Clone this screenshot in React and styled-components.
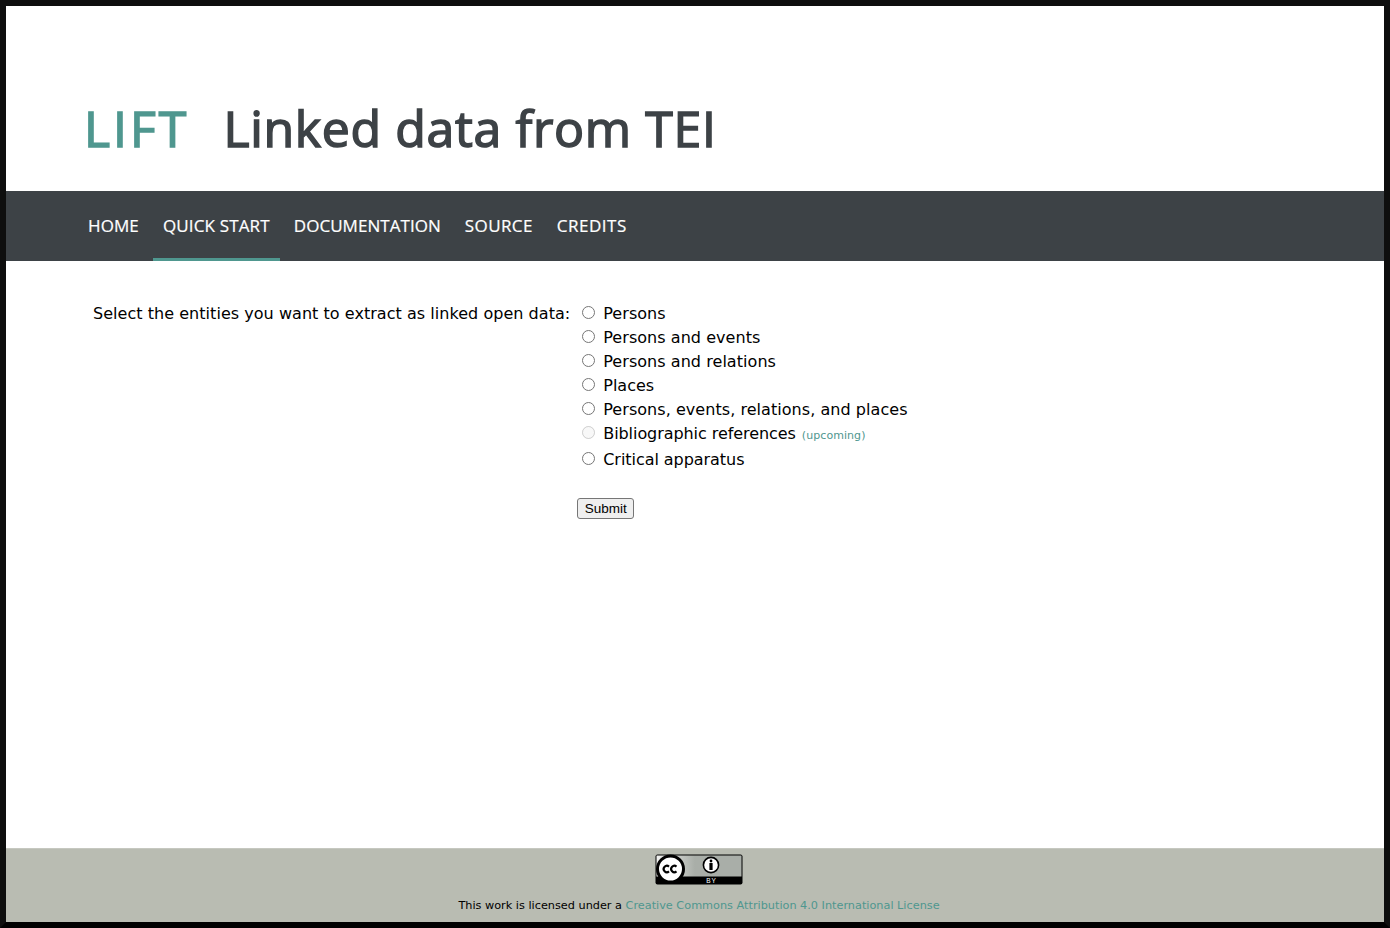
import React from 'react'
import styled, { createGlobalStyle } from 'styled-components'

const teal = '#4f978f'
const dark = '#3d4246'

const GlobalStyle = createGlobalStyle`
  html, body {
    margin: 0;
    padding: 0;
    background: #000;
  }
`

const Frame = styled.div`
  box-sizing: border-box;
  display: flex;
  flex-direction: column;
  height: 928px;
  border: 6px solid #0e0e0e;
  border-bottom-color: #000;
  background: #fff;
`

const Header = styled.header`
  display: flex;
  align-items: center;
  gap: 34px;
  height: 185px;
  box-sizing: border-box;
  padding: 58px 0 0 78px;
  font-family: "Open Sans", sans-serif;
  font-size: 50px;
  -webkit-text-stroke: 1.5px currentColor;
`

const Brand = styled.span`
  color: ${teal};
  letter-spacing: 3px;
`

const Title = styled.span`
  color: ${dark};
  letter-spacing: 0.65px;
`

const Nav = styled.nav`
  display: flex;
  height: 70px;
  padding-left: 72px;
  background: ${dark};
`

const NavItem = styled.a`
  display: flex;
  align-items: center;
  box-sizing: border-box;
  height: 70px;
  padding: 1px 10px 0;
  margin-right: 4px;
  color: #fff;
  font-family: "Open Sans", sans-serif;
  font-size: 17px;
  letter-spacing: ${p => p.$spacing}px;
  -webkit-text-stroke: 0.2px currentColor;
  border-bottom: 3px solid ${p => (p.$active ? teal : 'transparent')};
`

const Main = styled.main`
  flex: 1;
  display: flex;
  align-items: flex-start;
  padding: 40px 0 0 87px;
  font-family: "DejaVu Sans", Verdana, sans-serif;
  font-size: 16px;
  color: #000;
`

const Prompt = styled.div`
  line-height: 24px;
  margin: 1px 7px 0 0;
  letter-spacing: 0.04px;
`

const Form = styled.form`
  display: flex;
  flex-direction: column;
`

const Options = styled.div`
  display: flex;
  flex-direction: column;
`

const Option = styled.label`
  display: flex;
  align-items: center;
  height: 24px;
  padding-left: 5px;
  letter-spacing: ${p => p.$spacing ?? 0.05}px;
  margin-bottom: ${p => (p.$tall ? 2 : 0)}px;
`

const Radio = styled.input`
  width: 13px;
  height: 13px;
  margin: 0 8px 2px 0;
`

const Upcoming = styled.small`
  margin: 5px 0 0 6px;
  color: ${teal};
  font-size: 11px;
  letter-spacing: 0.06px;
`

const Submit = styled.button`
  align-self: flex-start;
  box-sizing: border-box;
  height: 21px;
  width: 57px;
  margin-top: 27px;
  padding: 0;
  font-family: "Liberation Sans", Arial, sans-serif;
  font-size: 13.5px;
  color: #000;
  background: #efefef;
  border: 1px solid #767676;
  border-radius: 3px;
`

const Footer = styled.footer`
  box-sizing: border-box;
  height: 74px;
  padding: 5px 0 0 8px;
  display: flex;
  flex-direction: column;
  align-items: center;
  background: #b9bcb2;
  border-top: 1px solid #c6c8c0;
  font-family: "DejaVu Sans", Verdana, sans-serif;
  font-size: 11.28px;
  color: #000;
`

const Licence = styled.p`
  margin: 14px 0 0;
  line-height: 14px;
`

const LicenceLink = styled.a`
  color: ${teal};
`

const CcBadge = () => (
  <svg width="88" height="31" viewBox="0 0 88 31" role="img" aria-label="CC BY">
    <defs>
      <linearGradient id="badgeFade" x1="0" x2="1" y1="0" y2="0">
        <stop offset="0" stopColor="#f2f2f0" />
        <stop offset="0.45" stopColor="#a9aea8" />
        <stop offset="1" stopColor="#a9aea8" />
      </linearGradient>
    </defs>
    <rect x="0.5" y="0.5" width="87" height="30" rx="2" fill="#000" />
    <rect x="1.5" y="1.5" width="85" height="21" fill="url(#badgeFade)" />
    <circle cx="15.5" cy="15" r="13" fill="#fff" stroke="#000" strokeWidth="3" />
    <path d="M14 12.6a3.2 3.2 0 1 0 0 4.8M21.5 12.6a3.2 3.2 0 1 0 0 4.8" fill="none" stroke="#000" strokeWidth="2.1" />
    <circle cx="56" cy="11" r="7.6" fill="#fff" stroke="#000" strokeWidth="1.6" />
    <circle cx="56" cy="7" r="1.4" fill="#000" />
    <rect x="54.4" y="9" width="3.2" height="7" fill="#000" />
    <text x="56.5" y="29.3" textAnchor="middle" fill="#fff" fontFamily="Liberation Sans, sans-serif" fontSize="6.5" letterSpacing="1">BY</text>
  </svg>
)

const options = [
  { label: 'Persons' },
  { label: 'Persons and events' },
  { label: 'Persons and relations' },
  { label: 'Places', spacing: 0 },
  { label: 'Persons, events, relations, and places' },
]

const navItems = [
  { label: 'HOME', spacing: 0.1 },
  { label: 'QUICK START', spacing: 0.15 },
  { label: 'DOCUMENTATION', spacing: 0.05 },
  { label: 'SOURCE', spacing: 0.4 },
  { label: 'CREDITS', spacing: 0.5 },
]

export default function App() {
  return (
    <Frame>
      <GlobalStyle />
      <Header>
        <Brand>LIFT</Brand>
        <Title>Linked data from TEI</Title>
      </Header>
      <Nav>
        {navItems.map(({ label, spacing }) => (
          <NavItem key={label} $spacing={spacing} $active={label === 'QUICK START'}>{label}</NavItem>
        ))}
      </Nav>
      <Main>
        <Prompt>Select the entities you want to extract as linked open data:</Prompt>
        <Form onSubmit={e => e.preventDefault()}>
          <Options>
            {options.map(({ label, spacing }) => (
              <Option key={label} $spacing={spacing}>
                <Radio type="radio" name="entity" />
                {label}
              </Option>
            ))}
            <Option $tall $spacing={-0.065}>
              <Radio type="radio" name="entity" disabled />
              Bibliographic references
              <Upcoming>(upcoming)</Upcoming>
            </Option>
            <Option $spacing={-0.05}>
              <Radio type="radio" name="entity" />
              Critical apparatus
            </Option>
          </Options>
          <Submit type="submit">Submit</Submit>
        </Form>
      </Main>
      <Footer>
        <CcBadge />
        <Licence>
          This work is licensed under a{' '}
          <LicenceLink>Creative Commons Attribution 4.0 International License</LicenceLink>
        </Licence>
      </Footer>
    </Frame>
  )
}
